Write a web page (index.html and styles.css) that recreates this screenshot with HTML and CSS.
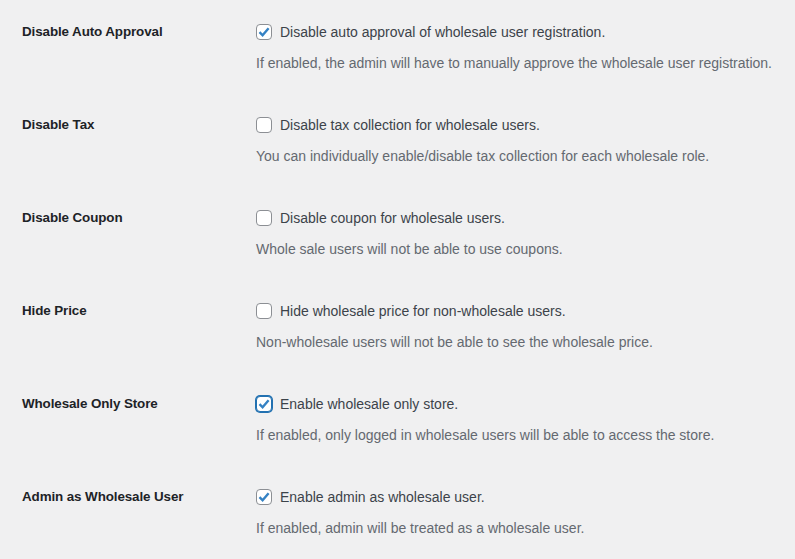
FILE: index.html
```html
<!DOCTYPE html>
<html>
<head>
<meta charset="utf-8">
<link rel="stylesheet" href="styles.css">
</head>
<body>
<div class="table">
  <div class="row">
    <div class="th">Disable Auto Approval</div>
    <div class="td">
      <label class="opt"><span class="cb checked"><svg viewBox="0 0 16 16" width="16" height="16"><polyline points="3.5,8.2 6.6,11.3 12.6,4.3" /></svg></span>Disable auto approval of wholesale user registration.</label>
      <p class="desc">If enabled, the admin will have to manually approve the wholesale user registration.</p>
    </div>
  </div>
  <div class="row">
    <div class="th">Disable Tax</div>
    <div class="td">
      <label class="opt"><span class="cb"></span>Disable tax collection for wholesale users.</label>
      <p class="desc">You can individually enable/disable tax collection for each wholesale role.</p>
    </div>
  </div>
  <div class="row">
    <div class="th">Disable Coupon</div>
    <div class="td">
      <label class="opt"><span class="cb"></span>Disable coupon for wholesale users.</label>
      <p class="desc">Whole sale users will not be able to use coupons.</p>
    </div>
  </div>
  <div class="row">
    <div class="th">Hide Price</div>
    <div class="td">
      <label class="opt"><span class="cb"></span>Hide wholesale price for non-wholesale users.</label>
      <p class="desc">Non-wholesale users will not be able to see the wholesale price.</p>
    </div>
  </div>
  <div class="row">
    <div class="th">Wholesale Only Store</div>
    <div class="td">
      <label class="opt"><span class="cb checked focus"><svg viewBox="0 0 16 16" width="16" height="16"><polyline points="3.5,8.2 6.6,11.3 12.6,4.3" /></svg></span>Enable wholesale only store.</label>
      <p class="desc">If enabled, only logged in wholesale users will be able to access the store.</p>
    </div>
  </div>
  <div class="row">
    <div class="th">Admin as Wholesale User</div>
    <div class="td">
      <label class="opt"><span class="cb checked"><svg viewBox="0 0 16 16" width="16" height="16"><polyline points="3.5,8.2 6.6,11.3 12.6,4.3" /></svg></span>Enable admin as wholesale user.</label>
      <p class="desc">If enabled, admin will be treated as a wholesale user.</p>
    </div>
  </div>
</div>
</body>
</html>
```

FILE: styles.css
```css
html, body {
  margin: 0;
  padding: 0;
  background: #f0f0f1;
}
body {
  font-family: "Liberation Sans", Arial, sans-serif;
  font-size: 14px;
  color: #3c434a;
  width: 795px;
  height: 559px;
  overflow: hidden;
}
.table {
  padding-left: 22px;
}
.row {
  display: flex;
  padding: 22px 0 20px;
  height: 51px;
}
.th {
  width: 234px;
  flex: none;
  font-weight: 700;
  font-size: 13.4px;
  letter-spacing: -0.1px;
  color: #1d2327;
  line-height: 19px;
}
.td {
  display: flex;
  flex-direction: column;
  gap: 11px;
}
.opt {
  display: flex;
  align-items: center;
  line-height: 20px;
  height: 20px;
}
.cb {
  width: 16px;
  height: 16px;
  box-sizing: border-box;
  border: 1px solid #8c8f94;
  border-radius: 4px;
  background: #fff;
  margin-right: 8px;
  position: relative;
  flex: none;
}
.cb svg {
  position: absolute;
  left: -1px;
  top: -1px;
}
.cb polyline {
  fill: none;
  stroke: #3582c4;
  stroke-width: 2.4;
  stroke-linecap: butt;
  stroke-linejoin: miter;
}
.cb.focus {
  border-color: #2271b1;
  box-shadow: 0 0 0 1px #2271b1;
}
.desc {
  margin: 0;
  color: #646970;
  line-height: 20px;
}
```
